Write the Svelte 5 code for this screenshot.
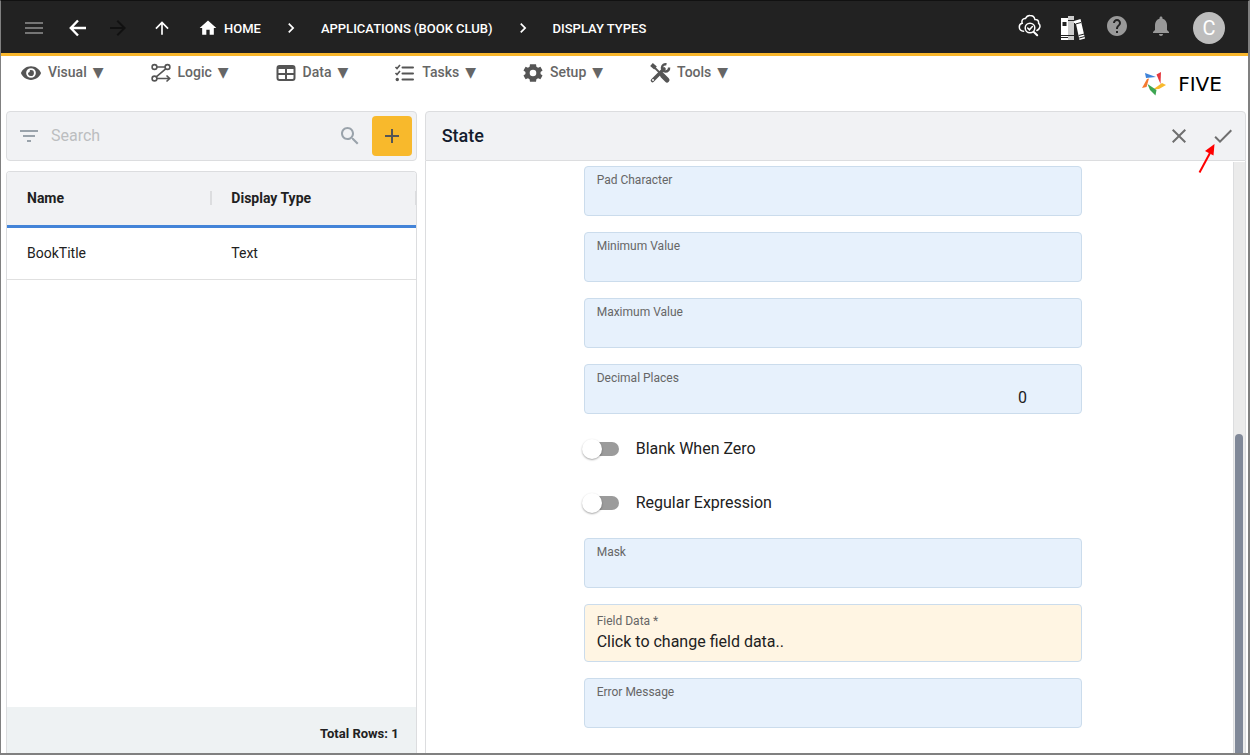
<script>
  const menus = ['Visual', 'Logic', 'Data', 'Tasks', 'Setup', 'Tools'];
  const rows = [{ name: 'BookTitle', type: 'Text' }];

  let search = $state('');
  let form = $state({
    pad: '',
    min: '',
    max: '',
    decimals: '0',
    blankWhenZero: false,
    regex: false,
    mask: '',
    error: ''
  });
</script>

{#snippet icon(d, size)}
  <svg width={size} height={size} viewBox="0 0 24 24" fill="currentColor" aria-hidden="true"><path {d} /></svg>
{/snippet}

{#snippet chevron()}
  {@render icon('M10 6 8.590 7.410 13.170 12l-4.580 4.590L10 18l6-6z', 20)}
{/snippet}

{#snippet field(id, label, key, numeric)}
  <div class="field">
    <label for={id}>{label}</label>
    <input {id} class:numeric type="text" bind:value={form[key]} />
  </div>
{/snippet}

{#snippet toggle(id, label, key)}
  <div class="toggle">
    <input {id} type="checkbox" role="switch" bind:checked={form[key]} />
    <label for={id}>{label}</label>
  </div>
{/snippet}

<div class="app">
  <header class="topbar">
    <button class="icon-btn dim" aria-label="Menu">{@render icon('M3 18h18v-2H3v2zm0-5h18v-2H3v2zm0-7v2h18V6H3z', 24)}</button>
    <button class="icon-btn back" aria-label="Back">
      <svg width="24" height="24" viewBox="0 0 24 24" fill="none" stroke="currentColor" stroke-width="2.4" aria-hidden="true"><path d="M20 12H5.500M12 4.500 4.800 12l7.200 7.500" /></svg>
    </button>
    <button class="icon-btn off" aria-label="Forward">{@render icon('M12 4l-1.410 1.410L16.170 11H4v2h12.170l-5.580 5.590L12 20l8-8z', 24)}</button>
    <button class="icon-btn" aria-label="Up">{@render icon('M4 12l1.410 1.410L11 7.830V20h2V7.830l5.580 5.590L20 12l-8-8-8 8z', 20)}</button>
    <nav class="crumbs" aria-label="Breadcrumb">
      <a href="#home">{@render icon('M10 20v-6h4v6h5v-8h3L12 3 2 12h3v8z', 20)}HOME</a>
      {@render chevron()}
      <a href="#applications">APPLICATIONS (BOOK CLUB)</a>
      {@render chevron()}
      <a href="#display-types">DISPLAY TYPES</a>
    </nav>
    <div class="tools">
      <button class="icon-btn" aria-label="Inspect">
        <svg width="24" height="24" viewBox="0 0 24 24" fill="none" stroke="currentColor" stroke-width="1.500" stroke-linecap="round" aria-hidden="true">
          <path d="M6.600 17.300C4 17.300 2.300 15.500 2.300 13c0-2 1.300-3.400 2.900-3.700C4.200 6.300 6 4.200 8.500 4.500 9.600 2.200 11.400 1.400 13 1.500c2.600 0 4.400 1.600 4.900 3.900 2.500-.2 4 1.500 3.700 3.900 1.300 1 1.600 2.600 1.200 4-.4 1.600-1.500 2.600-2.900 3.200" />
          <circle cx="13" cy="14" r="4.800" />
          <path d="M10.700 14l1.700 1.800 3-3.300" />
          <path d="M16.800 18l3.400 3.300" stroke-width="2" />
        </svg>
      </button>
      <button class="icon-btn books" aria-label="Library">
        <svg width="24" height="26" viewBox="1 0 24 26" aria-hidden="true">
          <path fill="#fff" d="M1 3h7v22H1z" />
          <path fill="#ccc" d="M8 1h6v24H8z" />
          <path fill="#fff" d="M14 6l6.500-2 4.500 19.500-5.500 1.500-3.500-16L14 9z" />
          <path fill="#222" d="M2.500 7h4v4h-4zM1 20h7v1H1zM1 22h7v1H1zM8 5h6v1H8zM8 20h6v1H8zM14 8h1v17h-1z" />
          <path stroke="#222" fill="none" d="M15.500 9l5.500-1.500M18.700 20.500l5.500-1.500M19.200 23l5.500-1.500" />
        </svg>
      </button>
      <button class="icon-btn grey" aria-label="Help">{@render icon('M12 2C6.480 2 2 6.480 2 12s4.480 10 10 10 10-4.480 10-10S17.520 2 12 2zm1 17h-2v-2h2v2zm2.070-7.750l-.9.920C13.450 12.900 13 13.500 13 15h-2v-.5c0-1.100.45-2.100 1.170-2.830l1.240-1.260c.37-.36.590-.86.590-1.410 0-1.100-.9-2-2-2s-2 .9-2 2H8c0-2.210 1.790-4 4-4s4 1.790 4 4c0 .88-.36 1.680-.93 2.250z', 24)}</button>
      <button class="icon-btn grey" aria-label="Notifications">{@render icon('M12 22c1.100 0 2-.9 2-2h-4c0 1.100.89 2 2 2zm6-6v-5c0-3.070-1.640-5.640-4.500-6.320V4c0-.83-.67-1.500-1.500-1.500s-1.500.67-1.500 1.500v.68C7.630 5.360 6 7.920 6 11v5l-2 2v1h16v-1l-2-2z', 24)}</button>
      <button class="avatar" aria-label="Account">C</button>
    </div>
  </header>

  <div class="menubar">
    <nav class="menus" aria-label="Sections">
      {#each menus as menu}
        <button class="menu">
          {#if menu === 'Visual'}
            {@render icon('M12 4.500C7 4.500 2.730 7.610 1 12c1.730 4.390 6 7.500 11 7.500s9.270-3.110 11-7.500c-1.730-4.390-6-7.500-11-7.500zM12 17.300a5.300 5.300 0 1 1 0-10.600 5.300 5.300 0 0 1 0 10.600zm0-8.500c-.5 0-.9.100-1.300.3.300 1.500-.6 2.500-1.900 2.500A3.200 3.200 0 1 0 12 8.800z', 22)}
          {:else if menu === 'Logic'}
            <svg width="22" height="22" viewBox="0 0 22 22" fill="none" stroke="currentColor" stroke-width="1.600" aria-hidden="true">
              <circle cx="4.500" cy="5" r="2.400" /><circle cx="17.500" cy="5" r="2.400" /><circle cx="4.500" cy="16.500" r="2.400" />
              <path d="M7 5h8M15.700 6.800 6.500 14.700M7 16.500h12.500M16.500 13.500l3.200 3-3.200 3" />
            </svg>
          {:else if menu === 'Data'}
            <svg width="22" height="22" viewBox="0 0 22 22" fill="none" stroke="currentColor" stroke-width="2" aria-hidden="true">
              <rect x="2.500" y="4" width="17" height="14" rx="2" /><path d="M3 6h16M3 12h16M11 6v12" /><path d="M4 5h14" />
            </svg>
          {:else if menu === 'Tasks'}
            <svg width="22" height="22" viewBox="0 0 22 22" fill="none" stroke="currentColor" stroke-width="2" aria-hidden="true">
              <path d="M8.500 5.500H19M8.500 11.500H19M8.500 17.500H19" stroke-linecap="round" />
              <path d="M1.500 5 3 6.500l3-3.500M1.500 11 3 12.500 6 9" stroke-width="1.600" /><circle cx="3.300" cy="17.500" r="1.700" fill="currentColor" stroke="none" />
            </svg>
          {:else if menu === 'Setup'}
            {@render icon('M20.300 12c0-.35 0-.7-.08-1.050l2.200-1.700-2.300-4-2.600 1.050a8.500 8.500 0 0 0-1.800-1.050L15.300 2.400h-4.600v0H8.700l-.4 2.850c-.65.27-1.250.62-1.800 1.050L3.900 5.250l-2.300 4 2.200 1.700c-.1.700-.1 1.400 0 2.100l-2.200 1.700 2.300 4 2.600-1.050c.55.43 1.150.78 1.800 1.050l.4 2.850h6.600l.4-2.850a8.500 8.500 0 0 0 1.800-1.050l2.600 1.050 2.300-4-2.200-1.700c.06-.35.100-.7.100-1.050zM12 15.600a3.600 3.600 0 1 1 0-7.200 3.600 3.600 0 0 1 0 7.200z', 22)}
          {:else}
            <svg width="22" height="22" viewBox="0 0 22 22" fill="none" stroke="currentColor" aria-hidden="true">
              <path d="M3.500 18.500 15 7" stroke-width="3.600" stroke-linecap="round" />
              <path d="M17.500 2.400a3.600 3.600 0 1 0 2.600 3.100" stroke-width="2.400" />
              <path d="M2.500 2.500 6.500 6" stroke-width="4" /><path d="M5 5l8 8" stroke-width="1.800" />
              <path d="M13.500 13.500l4.500 4.500" stroke-width="5" stroke-linecap="round" />
              <circle cx="4" cy="18" r="1" fill="#fff" stroke="none" />
            </svg>
          {/if}
          <span>{menu}</span>
          <span>▼</span>
        </button>
      {/each}
    </nav>
    <a class="brand" href="#five">
      <svg width="24" height="26" viewBox="0 0 24 26" aria-hidden="true">
        <path fill="#3f83d8" d="M3 2l11 4-10 1z" />
        <path fill="#e5393f" d="M14.500 3.500 19 1l-.5 12z" />
        <path fill="#f8b92c" d="M24 14l-7 4-6 .5 9-6.500z" />
        <path fill="#3da552" d="M5.500 13l9 6-1 5.500L8 19z" />
        <path fill="#f47a30" d="M0 17 5 8l2-.5L4.500 16z" />
      </svg>
      <span>FIVE</span>
    </a>
  </div>

  <main>
    <section class="left">
      <div class="searchbar">
        {@render icon('M10 18h4v-2h-4v2zM3 6v2h18V6H3zm3 7h12v-2H6v2z', 24)}
        <input type="text" placeholder="Search" aria-label="Search" bind:value={search} />
        {@render icon('M15.500 14h-.79l-.28-.27C15.410 12.590 16 11.110 16 9.500 16 5.910 13.090 3 9.500 3S3 5.910 3 9.500 5.910 16 9.500 16c1.610 0 3.090-.59 4.230-1.570l.27.28v.79l5 4.990L20.490 19l-4.990-5zm-6 0C7.010 14 5 11.990 5 9.500S7.010 5 9.500 5 14 7.010 14 9.500 11.990 14 9.500 14z', 24)}
        <button class="add" aria-label="Add">{@render icon('M19 13h-6v6h-2v-6H5v-2h6V5h2v6h6v2z', 24)}</button>
      </div>
      <div class="list">
        <table>
          <thead>
            <tr><th><div>Name</div></th><th><div>Display Type</div></th></tr>
          </thead>
          <tbody>
            {#each rows as row}
              <tr><td>{row.name}</td><td>{row.type}</td></tr>
            {/each}
          </tbody>
        </table>
        <footer>Total Rows: {rows.length}</footer>
      </div>
    </section>

    <section class="detail">
      <div class="title">
        <h1>State</h1>
        <button class="icon-btn" aria-label="Cancel">{@render icon('M19 6.410 17.590 5 12 10.590 6.410 5 5 6.410 10.590 12 5 17.590 6.410 19 12 13.410 17.590 19 19 17.590 13.410 12z', 24)}</button>
        <button class="icon-btn save" aria-label="Save">
          {@render icon('M9 16.170 4.830 12l-1.420 1.410L9 19 21 7l-1.410-1.410z', 24)}
          <svg class="pointer" width="18" height="32" viewBox="0 0 18 32" aria-hidden="true">
            <path d="M1.500 30.500 12 11" stroke="#f00" stroke-width="2" /><path d="M16.500 2 15.500 13.500 7 9z" fill="#f00" />
          </svg>
        </button>
      </div>
      <div class="body">
        <form onsubmit={(e) => e.preventDefault()}>
          {@render field('pad', 'Pad Character', 'pad', false)}
          {@render field('min', 'Minimum Value', 'min', false)}
          {@render field('max', 'Maximum Value', 'max', false)}
          {@render field('decimals', 'Decimal Places', 'decimals', true)}
          {@render toggle('blank', 'Blank When Zero', 'blankWhenZero')}
          {@render toggle('regex', 'Regular Expression', 'regex')}
          {@render field('mask', 'Mask', 'mask', false)}
          <button type="button" class="field-data">
            <small>Field Data *</small>
            <span>Click to change field data..</span>
          </button>
          {@render field('error', 'Error Message', 'error', false)}
        </form>
        <div class="track"><div class="thumb"></div></div>
      </div>
    </section>
  </main>
</div>

<style>
  :global(body) {
    background: #fff;
  }
  .app,
  .app * {
    box-sizing: border-box;
  }
  .app {
    display: flex;
    flex-direction: column;
    height: 100vh;
    overflow: hidden;
    border: 1px solid #808080;
    border-top-color: #111;
    border-right-width: 2px;
    border-bottom-width: 2px;
    font-family: Roboto, "DejaVu Sans", sans-serif;
    font-size: 14px;
    color: #212121;
  }
  button,
  input {
    font: inherit;
    color: inherit;
    border: 0;
    padding: 0;
    margin: 0;
    background: none;
  }
  button {
    cursor: pointer;
  }
  a {
    color: inherit;
    text-decoration: none;
  }
  svg {
    display: block;
    flex: none;
  }

  .topbar {
    display: flex;
    align-items: center;
    flex: none;
    height: 55px;
    padding: 2px 23px 0 21px;
    border-bottom: 3px solid #f8b62b;
    background: #222;
    color: #fff;
  }
  .topbar > .icon-btn {
    width: 24px;
    margin-right: 20px;
  }
  .topbar > .back {
    margin-right: 16px;
  }
  .icon-btn {
    display: flex;
    align-items: center;
    justify-content: center;
  }
  .dim {
    color: #757575;
  }
  .off {
    color: #111;
  }
  .grey {
    color: #999;
  }
  .crumbs {
    display: flex;
    align-items: center;
    gap: 20px;
    margin-left: 4px;
    font-size: 13px;
    font-weight: 500;
  }
  .crumbs a {
    display: flex;
    align-items: center;
    gap: 6px;
  }
  .tools {
    display: flex;
    align-items: center;
    gap: 20px;
    margin-left: auto;
  }
  .tools .icon-btn {
    padding-bottom: 4px;
  }
  .tools .books {
    padding-bottom: 0;
  }
  .avatar {
    width: 32px;
    height: 32px;
    border-radius: 50%;
    background: #bdbdbd;
    color: #fff;
    font-size: 20px;
  }

  .menubar {
    display: flex;
    justify-content: space-between;
    flex: none;
    height: 55px;
    padding: 0 19px;
  }
  .menus {
    display: flex;
    align-items: center;
    gap: 46px;
    height: 33px;
  }
  .menu {
    display: flex;
    align-items: center;
    gap: 6px;
    color: #555;
    font-weight: 500;
  }
  .menu span {
    padding-bottom: 2px;
    color: #666;
  }
  .brand {
    display: flex;
    align-items: center;
    gap: 5px;
    color: #000;
    font: 20px "DejaVu Sans", sans-serif;
  }
  .brand span {
    min-width: 58px;
    text-align: center;
  }

  main {
    display: grid;
    grid-template-columns: minmax(0, 1fr) minmax(0, 2fr);
    gap: 8px;
    flex: 1;
    min-height: 0;
    padding: 0 2px 0 5px;
  }
  .left,
  .detail {
    display: flex;
    flex-direction: column;
    min-height: 0;
  }
  .searchbar {
    display: flex;
    align-items: center;
    flex: none;
    gap: 10px;
    height: 50px;
    margin-bottom: 10px;
    padding: 0 4px 0 10px;
    border: 1px solid #dcdddf;
    border-radius: 4px;
    background: #f1f2f4;
    color: #9aa3ab;
  }
  .searchbar input {
    flex: 1;
    min-width: 0;
    padding-bottom: 2px;
    font-size: 16px;
    color: #212121;
    outline: 0;
  }
  .searchbar input::placeholder {
    color: #bcbec0;
    opacity: 1;
  }
  .add {
    display: grid;
    place-items: center;
    width: 40px;
    height: 40px;
    border-radius: 4px;
    background: #f8b92c;
    color: #555;
  }
  .list {
    display: flex;
    flex-direction: column;
    flex: 1;
    min-height: 0;
    overflow: hidden;
    border: 1px solid #dcdddf;
    border-bottom: 0;
    border-radius: 4px 4px 0 0;
  }
  table {
    width: 100%;
    table-layout: fixed;
    border-collapse: separate;
    border-spacing: 0;
    text-align: left;
  }
  thead tr {
    background: #f1f2f4;
  }
  th {
    height: 56px;
    padding: 0 0 2px;
    border-bottom: 3px solid #4484d8;
    font-weight: 700;
  }
  th div {
    margin-right: -1px;
    padding-left: 20px;
    border-right: 2px solid #dcdddf;
    line-height: 14px;
  }
  td {
    height: 52px;
    padding: 0 0 2px 20px;
    border-bottom: 1px solid #e0e0e0;
  }
  footer {
    margin-top: auto;
    height: 46px;
    padding: 4px 17px 0 0;
    background: #eef2f3;
    font-size: 13px;
    font-weight: 700;
    line-height: 46px;
    text-align: right;
  }

  .title {
    display: flex;
    align-items: center;
    flex: none;
    gap: 20px;
    height: 50px;
    padding: 0 10px 0 16px;
    border: 1px solid #dcdddf;
    border-radius: 4px 4px 0 0;
    background: #f1f2f4;
    color: #6f6f6f;
  }
  h1 {
    flex: 1;
    margin: 0;
    padding-bottom: 2px;
    color: #141c2e;
    font-size: 18px;
    font-weight: 500;
  }
  .save {
    position: relative;
  }
  .pointer {
    position: absolute;
    top: 18px;
    left: -13px;
  }
  .body {
    display: flex;
    flex: 1;
    min-height: 0;
    border: solid #dcdddf;
    border-width: 0 1px;
  }
  form {
    display: flex;
    flex-direction: column;
    flex: 1;
    gap: 16px;
    min-width: 0;
    padding: 5px 151px 0 158px;
    overflow: hidden;
  }
  .field {
    flex: none;
    height: 50px;
    padding: 6px 12px;
    border: 1px solid #cbdcec;
    border-radius: 4px;
    background: #e7f1fc;
  }
  .field label,
  .field-data small {
    display: block;
    color: #666;
    font-size: 12px;
    line-height: 14px;
  }
  .field input {
    display: block;
    width: 100%;
    height: 24px;
    font-size: 16px;
    outline: 0;
  }
  .field .numeric {
    padding-right: 42px;
    text-align: right;
  }
  .field-data {
    flex: none;
    height: 58px;
    padding: 4px 12px 0;
    border: 1px solid #cbdcec;
    border-radius: 4px;
    background: #fff5e3;
    text-align: left;
  }
  .field-data span {
    display: block;
    font-size: 16px;
    line-height: 28px;
  }
  .toggle {
    display: flex;
    align-items: center;
    flex: none;
    gap: 17px;
    height: 38px;
    font-size: 16px;
  }
  .toggle label {
    padding-bottom: 2px;
  }
  .toggle input {
    display: flex;
    align-items: center;
    appearance: none;
    width: 35px;
    height: 14px;
    border-radius: 7px;
    background: #9b9b9b;
  }
  .toggle input::before {
    content: "";
    width: 20px;
    height: 20px;
    margin-left: -2px;
    border-radius: 50%;
    background: #fff;
    box-shadow: 0 1px 2px rgba(0, 0, 0, 0.35);
  }
  .toggle input:checked::before {
    margin-left: 17px;
  }
  .track {
    display: grid;
    grid-template-rows: 46fr 54fr;
    width: 12px;
    margin-top: 1px;
    padding: 0 2px 0 1px;
    border-left: 1px solid #dcdddf;
    background: #ebebeb;
  }
  .thumb {
    grid-row: 2;
    border-radius: 4px 4px 0 0;
    background: #808898;
  }
</style>
